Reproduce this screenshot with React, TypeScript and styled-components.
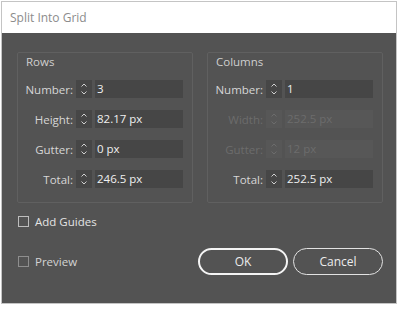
import React from "react";
import styled, { createGlobalStyle } from "styled-components";

const Global = createGlobalStyle`
  html, body { margin: 0; padding: 0; background: #ffffff; }
  body { font-family: "Open Sans", "Liberation Sans", sans-serif; }
  * { box-sizing: border-box; }
`;

const Page = styled.div`
  width: 400px;
  height: 309px;
  padding: 1px 3px 5px 1px;
`;

const Window = styled.div`
  width: 396px;
  height: 303px;
  border: 1px solid #c4c4c4;
  display: flex;
  flex-direction: column;
  background: #535353;
`;

const TitleBar = styled.div`
  height: 31px;
  flex: none;
  background: #ffffff;
  display: flex;
  align-items: center;
  padding-left: 8px;
  font-size: 12px;
  color: #8c8c8c;
`;

const Body = styled.div`
  flex: 1;
  display: flex;
  flex-direction: column;
  padding: 19px 13px 0 15px;
`;

const Groups = styled.div`
  display: grid;
  grid-template-columns: 176px 176px;
  column-gap: 14px;
`;

const Group = styled.div`
  height: 151px;
  border: 1px solid #606060;
  border-radius: 2px;
  padding: 1px 0 0 0;
  display: flex;
  flex-direction: column;
`;

const Legend = styled.div<{ $indent: number }>`
  font-size: 11.5px;
  color: #cfcfcf;
  height: 16px;
  line-height: 16px;
  padding-left: ${(p) => p.$indent}px;
  margin-bottom: 10px;
`;

const Row = styled.div`
  display: grid;
  grid-template-columns: 55px 16px 88px;
  column-gap: 3px;
  align-items: center;
  height: 18px;
  margin-bottom: 12px;
`;

const Label = styled.span<{ $disabled?: boolean }>`
  text-align: right;
  font-size: 11.5px;
  color: ${(p) => (p.$disabled ? "#6c6c6c" : "#d6d6d6")};
  white-space: nowrap;
`;

const Spinner = styled.div<{ $disabled?: boolean }>`
  height: 18px;
  background: ${(p) => (p.$disabled ? "#575757" : "#464646")};
  display: flex;
  align-items: center;
  justify-content: center;
  color: ${(p) => (p.$disabled ? "#6c6c6c" : "#d0d0d0")};
`;

const Input = styled.div<{ $disabled?: boolean }>`
  height: 18px;
  background: ${(p) => (p.$disabled ? "#575757" : "#464646")};
  color: ${(p) => (p.$disabled ? "#6c6c6c" : "#f0f0f0")};
  font-size: 11.5px;
  line-height: 18px;
  padding-left: 2px;
`;

const CheckRow = styled.label<{ $dim?: boolean }>`
  display: flex;
  align-items: center;
  gap: 6px;
  font-size: 11.5px;
  color: ${(p) => (p.$dim ? "#d4d4d4" : "#e4e4e4")};
  padding-left: 1px;
`;

const Box = styled.span<{ $dim?: boolean }>`
  width: 11px;
  height: 11px;
  border: 1px solid ${(p) => (p.$dim ? "#8e8e8e" : "#bdbdbd")};
  display: inline-block;
`;

const GuidesRow = styled.div`
  margin-top: 10px;
  height: 16px;
  display: flex;
  align-items: center;
`;

const Footer = styled.div`
  margin-top: 19px;
  display: flex;
  align-items: center;
  justify-content: space-between;
`;

const Buttons = styled.div`
  display: flex;
  gap: 5px;
`;

const Button = styled.button<{ $primary?: boolean }>`
  width: 90px;
  height: 27px;
  border-radius: 14px;
  background: transparent;
  border: ${(p) => (p.$primary ? "2px solid #f4f4f4" : "1.5px solid #e2e2e2")};
  color: #ececec;
  font-family: "Open Sans", "Liberation Sans", sans-serif;
  font-size: 12px;
  padding: 0;
`;

const Chevrons = () => (
  <svg width="10" height="16" viewBox="0 0 10 16" fill="none" stroke="currentColor" strokeWidth="1">
    <path d="M2.5 5.5 L5 3 L7.5 5.5" />
    <path d="M2.5 10.5 L5 13 L7.5 10.5" />
  </svg>
);

type Field = { label: string; value: string; disabled?: boolean };

const rows: Field[] = [
  { label: "Number:", value: "3" },
  { label: "Height:", value: "82.17 px" },
  { label: "Gutter:", value: "0 px" },
  { label: "Total:", value: "246.5 px" },
];

const cols: Field[] = [
  { label: "Number:", value: "1" },
  { label: "Width:", value: "252.5 px", disabled: true },
  { label: "Gutter:", value: "12 px", disabled: true },
  { label: "Total:", value: "252.5 px" },
];

const FieldGroup = ({ title, indent, fields }: { title: string; indent: number; fields: Field[] }) => (
  <Group>
    <Legend $indent={indent}>{title}</Legend>
    {fields.map((f) => (
      <Row key={f.label}>
        <Label $disabled={f.disabled}>{f.label}</Label>
        <Spinner $disabled={f.disabled}>
          <Chevrons />
        </Spinner>
        <Input $disabled={f.disabled}>{f.value}</Input>
      </Row>
    ))}
  </Group>
);

export default function App() {
  return (
    <Page>
      <Global />
      <Window>
        <TitleBar>Split Into Grid</TitleBar>
        <Body>
          <Groups>
            <FieldGroup title="Rows" indent={8} fields={rows} />
            <FieldGroup title="Columns" indent={8} fields={cols} />
          </Groups>
          <GuidesRow>
            <CheckRow>
              <Box />
              Add Guides
            </CheckRow>
          </GuidesRow>
          <Footer>
            <CheckRow $dim>
              <Box $dim />
              Preview
            </CheckRow>
            <Buttons>
              <Button $primary>OK</Button>
              <Button>Cancel</Button>
            </Buttons>
          </Footer>
        </Body>
      </Window>
    </Page>
  );
}
